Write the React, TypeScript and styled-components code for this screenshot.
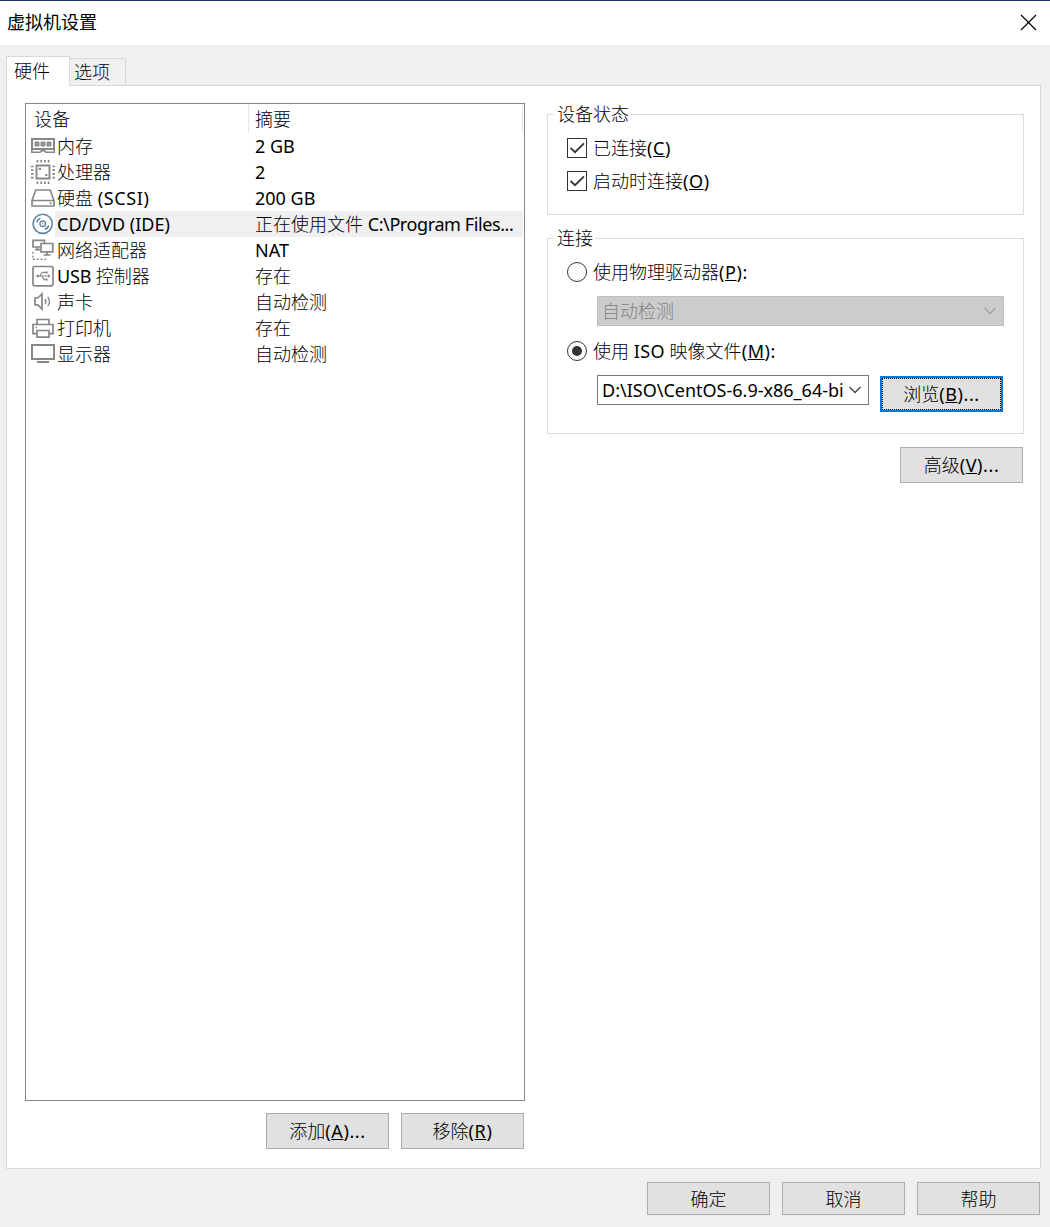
import React, { useState } from "react";
import styled, { createGlobalStyle, css } from "styled-components";

const GlobalStyle = createGlobalStyle`
  *, *::before, *::after { box-sizing: border-box; }
  html, body { margin: 0; padding: 0; background: #f0f0f0; }
  body {
    font-family: "Noto Sans", "Noto Sans CJK SC", sans-serif;
    font-size: 18px;
    line-height: 26px;
    color: #000;
  }
  button { font: inherit; color: inherit; }
`;

const Dialog = styled.div`
  width: 1050px;
  height: 1227px;
  display: flex;
  flex-direction: column;
  background: #f0f0f0;
  border-top: 1px solid #17375e;
  overflow: hidden;
  white-space: nowrap;
`;

const TitleBar = styled.header`
  height: 44px;
  flex: none;
  display: flex;
  align-items: center;
  justify-content: space-between;
  padding: 0 13px 2px 7px;
  background: #fff;
`;

const Title = styled.h1`
  margin: 0;
  font-size: 18px;
  font-weight: 400;
`;

const CloseButton = styled.button`
  width: 17px;
  height: 17px;
  padding: 0;
  border: 0;
  background: none;
  display: flex;
`;

const TabStrip = styled.nav`
  height: 40px;
  flex: none;
  display: flex;
  align-items: flex-end;
  padding-left: 6px;
`;

const Tab = styled.button<{ $active?: boolean }>`
  padding: 0;
  border: 1px solid #d9d9d9;
  border-bottom: 0;
  display: flex;
  font-weight: 300;
  ${(p) =>
    p.$active
      ? css`
          width: 64px;
          height: 30px;
          margin-bottom: -1px;
          padding: 1px 0 0 7px;
          background: #fff;
          z-index: 1;
        `
      : css`
          width: 56px;
          height: 27px;
          padding: 0 0 0 4px;
          border-left: 0;
          background: #f0f0f0;
        `}
`;

const TabPage = styled.main`
  width: 1035px;
  height: 1084px;
  flex: none;
  margin-left: 6px;
  display: flex;
  gap: 22px;
  padding: 17px 0 0 18px;
  background: #fff;
  border: 1px solid #d9d9d9;
`;

const DeviceColumn = styled.section`
  width: 500px;
  display: flex;
  flex-direction: column;
  gap: 12px;
`;

const DeviceList = styled.div`
  height: 998px;
  border: 1px solid #828790;
  background: #fff;
`;

const ListHeader = styled.div`
  height: 29px;
  display: flex;
  padding-right: 1px;
  font-weight: 300;
`;

const HeaderCell = styled.div<{ $width: number; $indent: number }>`
  width: ${(p) => p.$width}px;
  height: 28px;
  margin-top: 1px;
  padding: 1px 0 0 ${(p) => p.$indent}px;
  border-right: 1px solid #e5e5e5;
`;

const DeviceRow = styled.div`
  height: 26px;
  display: flex;
  padding: 0 1px 0 5px;
  font-weight: 300;
`;

const RowText = styled.div<{ $selected?: boolean }>`
  flex: 1;
  display: flex;
  background: ${(p) => (p.$selected ? "#f0f0f0" : "transparent")};
`;

const DeviceName = styled.span`
  width: 200px;
  padding-left: 2px;
`;

const Latin = styled.span<{ $spacing?: number }>`
  font-weight: 400;
  letter-spacing: ${(p) => p.$spacing ?? 0}px;
`;

const ButtonRow = styled.div<{ $top?: number; $inset?: number }>`
  display: flex;
  justify-content: flex-end;
  gap: 12px;
  margin-top: ${(p) => p.$top ?? 0}px;
  padding-right: ${(p) => p.$inset ?? 0}px;
`;

const PushButton = styled.button<{ $height?: number; $focused?: boolean }>`
  width: 123px;
  height: ${(p) => p.$height ?? 36}px;
  flex: none;
  padding: 0;
  display: flex;
  align-items: center;
  justify-content: center;
  background: #e1e1e1;
  border: 1px solid #adadad;
  font-weight: 300;
  ${(p) =>
    p.$focused &&
    css`
      border: 2px solid #0078d7;
      outline: 1px dotted #000;
      outline-offset: -3px;
    `}
`;

const Settings = styled.section`
  width: 477px;
  padding-top: 11px;
  display: flex;
  flex-direction: column;
`;

const Group = styled.div<{ $height: number; $top?: number }>`
  height: ${(p) => p.$height}px;
  margin-top: ${(p) => p.$top ?? 0}px;
  padding: 0 19px;
  border: 1px solid #dcdcdc;
  display: flex;
  flex-direction: column;
  font-weight: 300;
`;

const Legend = styled.div`
  height: 26px;
  flex: none;
  align-self: flex-start;
  margin: -14px 0 1px -13px;
  padding: 0 2px 0 3px;
  background: #fff;
`;

const Choice = styled.div<{ $top: number }>`
  height: 20px;
  flex: none;
  margin-top: ${(p) => p.$top}px;
  display: flex;
  align-items: center;
  gap: 6px;
`;

const CheckMark = styled.span`
  width: 20px;
  height: 20px;
  border: 1px solid #333;
  background: #fff;
  display: flex;
`;

const RadioMark = styled.span<{ $checked?: boolean }>`
  width: 20px;
  height: 20px;
  border: 1px solid #333;
  border-radius: 50%;
  display: flex;
  align-items: center;
  justify-content: center;

  &::after {
    content: "";
    display: ${(p) => (p.$checked ? "block" : "none")};
    width: 10px;
    height: 10px;
    border-radius: 50%;
    background: #333;
  }
`;

const Combo = styled.div<{ $width: number; $disabled?: boolean }>`
  width: ${(p) => p.$width}px;
  height: 30px;
  flex: none;
  display: flex;
  align-items: center;
  justify-content: space-between;
  padding: 0 6px 0 4px;
  border: 1px solid ${(p) => (p.$disabled ? "#bfbfbf" : "#7a7a7a")};
  background: ${(p) => (p.$disabled ? "#ccc" : "#fff")};
  color: ${(p) => (p.$disabled ? "#838383" : "#000")};
`;

const ComboRow = styled.div<{ $top: number }>`
  display: flex;
  align-items: flex-start;
  gap: 11px;
  margin: ${(p) => p.$top}px 0 0 30px;
`;

const BrowseSlot = styled.div`
  padding-top: 1px;
`;

const Footer = styled.footer`
  padding: 13px 10px 0 0;
`;

const G = "#868686";

const Glyph = styled.svg`
  width: 24px;
  height: 26px;
  flex: none;
  display: block;
`;

const MemoryIcon = () => (
  <Glyph viewBox="0 0 24 26" fill="none" stroke={G}>
    <path d="M1 6h22v10H1z" strokeWidth="2" />
    <path d="M4 9h4v4H4zM10 9h4v4h-4zM16 9h4v4h-4z" fill="#999" strokeWidth="1" />
    <path d="M.8 16v3.3h8.4l1.2-1.5h3.2l1.2 1.5h8.4V16" strokeWidth="1.5" />
  </Glyph>
);

const CpuIcon = () => (
  <Glyph viewBox="0 0 24 26" fill="none" stroke={G}>
    <path d="M5.5 6.5h13v13h-13z" strokeWidth="1.9" />
    <path
      d="M6.5 1v2.6M10.2 1v2.6M13.9 1v2.6M17.6 1v2.6M6.5 22.4V25M10.2 22.4V25M13.9 22.4V25M17.6 22.4V25M0 7.5h2.6M0 11.2h2.6M0 14.9h2.6M0 18.6h2.6M21.4 7.5H24M21.4 11.2H24M21.4 14.9H24M21.4 18.6H24"
      strokeWidth="1.7"
    />
    <path d="M7.8 9.8H10M14.2 16h2.2" strokeWidth="2.2" />
  </Glyph>
);

const DiskIcon = () => (
  <Glyph viewBox="0 0 24 26" fill="none" stroke={G} strokeWidth="1.7" strokeLinejoin="round">
    <path d="M1 15.5 4.8 5h14.4L23 15.5V21H1zM1 15.5h22" />
    <path d="M18.5 18.3h2" />
  </Glyph>
);

const DiscIcon = () => (
  <Glyph viewBox="0 0 24 26" fill="none" stroke="#6487a5" strokeWidth="1.6">
    <circle cx="11.7" cy="12.8" r="9.6" fill="#fff" />
    <circle cx="11.7" cy="12.8" r="2.8" strokeWidth="1.4" />
    <circle cx="11.7" cy="12.8" r=".7" fill="#6487a5" stroke="none" />
    <path d="M5.8 11.2a6.2 6.2 0 0 1 3.6-4M17.6 14.4a6.2 6.2 0 0 1-3.6 4" strokeWidth="1.7" />
  </Glyph>
);

const NetworkIcon = () => (
  <Glyph viewBox="0 0 24 26" fill="none" stroke={G} strokeWidth="1.7">
    <path d="M9 10H2V3.3h11.5v3M6.5 10v2.5M4 12.7h5" />
    <path d="M10 6.5h11.8v8.3H10zM16 15v2.5M12.5 18h7" />
    <path d="M2 15v8M2 22.3h13" strokeDasharray="1.8 2" strokeWidth="1.5" />
  </Glyph>
);

const UsbIcon = () => (
  <Glyph viewBox="0 0 24 26" fill="none" stroke={G} strokeWidth="1.7">
    <rect x="2" y="3.5" width="20" height="19.3" rx="2" />
    <path d="M6 13h12M8.5 13l2.8-3.6H15M10.5 13l2.6 3.6H15" strokeWidth="1.2" />
    <path d="M4.6 13l2.8-1.8v3.6zM17 11.2l2.8 1.8-2.8 1.8z" fill={G} stroke="none" />
    <path d="M14.6 8.4h2v2h-2zM14.6 15.6h2v2h-2z" fill={G} stroke="none" />
  </Glyph>
);

const SoundIcon = () => (
  <Glyph viewBox="0 0 24 26" fill="none" stroke={G} strokeWidth="1.7">
    <path d="M4 9h2.8L11 5v15l-4.2-4.2H4z" />
    <path d="M14 10q1.7 2.5 0 5M16.8 8q3.2 4.5 0 9" strokeWidth="1.4" />
  </Glyph>
);

const PrinterIcon = () => (
  <Glyph viewBox="0 0 24 26" fill="none" stroke={G} strokeWidth="1.7">
    <path d="M6 9.5V4.5h12v5M6 18.7H2V9.5h20v9.2h-4" />
    <path d="M6 15.5h12v6.7H6z" />
    <path d="M4.5 12.5H6" />
  </Glyph>
);

const DisplayIcon = () => (
  <Glyph viewBox="0 0 24 26" fill="none" stroke={G} strokeWidth="2">
    <path d="M1 4h22v14H1zM6 21h12" />
  </Glyph>
);

const Chevron = ({ color }: { color: string }) => (
  <svg width="14" height="8" viewBox="0 0 14 8" fill="none" stroke={color} strokeWidth="1.3">
    <path d="M1.5 1 7 6.5 12.5 1" />
  </svg>
);

const Tick = () => (
  <svg width="18" height="18" viewBox="0 0 18 18" fill="none" stroke="#333" strokeWidth="1.8">
    <path d="M2.5 8.8 7 13.2 16 4.3" />
  </svg>
);

const Accel = ({ k, after = "" }: { k: string; after?: string }) => (
  <Latin $spacing={0.6}>
    (<u>{k}</u>){after}
  </Latin>
);

const devices: { icon: React.FC; name: React.ReactNode; summary: React.ReactNode }[] = [
  { icon: MemoryIcon, name: "内存", summary: <Latin>2 GB</Latin> },
  { icon: CpuIcon, name: "处理器", summary: <Latin>2</Latin> },
  { icon: DiskIcon, name: <>硬盘 <Latin $spacing={0.65}>(SCSI)</Latin></>, summary: <Latin>200 GB</Latin> },
  {
    icon: DiscIcon,
    name: <Latin>CD/DVD (IDE)</Latin>,
    summary: <>正在使用文件 <Latin $spacing={-0.4}>C:\Program Files...</Latin></>,
  },
  { icon: NetworkIcon, name: "网络适配器", summary: <Latin>NAT</Latin> },
  { icon: UsbIcon, name: <><Latin $spacing={-0.2}>USB</Latin> 控制器</>, summary: "存在" },
  { icon: SoundIcon, name: "声卡", summary: "自动检测" },
  { icon: PrinterIcon, name: "打印机", summary: "存在" },
  { icon: DisplayIcon, name: "显示器", summary: "自动检测" },
];

export default function App() {
  const [selected, setSelected] = useState(3);

  return (
    <>
      <GlobalStyle />
      <Dialog>
        <TitleBar>
          <Title>虚拟机设置</Title>
          <CloseButton aria-label="关闭">
            <svg width="17" height="17" viewBox="0 0 17 17" stroke="#000" strokeWidth="1.2">
              <path d="M1 1l15 15M16 1 1 16" />
            </svg>
          </CloseButton>
        </TitleBar>
        <TabStrip>
          <Tab $active>硬件</Tab>
          <Tab>选项</Tab>
        </TabStrip>
        <TabPage>
          <DeviceColumn>
            <DeviceList>
              <ListHeader>
                <HeaderCell $width={223} $indent={8}>设备</HeaderCell>
                <HeaderCell $width={274} $indent={6}>摘要</HeaderCell>
              </ListHeader>
              {devices.map(({ icon: Icon, name, summary }, i) => (
                <DeviceRow key={i} onClick={() => setSelected(i)}>
                  <Icon />
                  <RowText $selected={i === selected}>
                    <DeviceName>{name}</DeviceName>
                    <span>{summary}</span>
                  </RowText>
                </DeviceRow>
              ))}
            </DeviceList>
            <ButtonRow $inset={1}>
              <PushButton>添加<Accel k="A" after="..." /></PushButton>
              <PushButton>移除<Accel k="R" /></PushButton>
            </ButtonRow>
          </DeviceColumn>
          <Settings>
            <Group $height={101}>
              <Legend>设备状态</Legend>
              <Choice $top={10}>
                <CheckMark><Tick /></CheckMark>
                <span>已连接<Accel k="C" /></span>
              </Choice>
              <Choice $top={13}>
                <CheckMark><Tick /></CheckMark>
                <span>启动时连接<Accel k="O" /></span>
              </Choice>
            </Group>
            <Group $height={196} $top={23}>
              <Legend>连接</Legend>
              <Choice $top={10}>
                <RadioMark />
                <span>使用物理驱动器<Accel k="P" after=":" /></span>
              </Choice>
              <ComboRow $top={14}>
                <Combo $width={407} $disabled>
                  自动检测
                  <Chevron color="#a0a0a0" />
                </Combo>
              </ComboRow>
              <Choice $top={15}>
                <RadioMark $checked />
                <span>使用 <Latin $spacing={0.4}>ISO</Latin> 映像文件<Accel k="M" after=":" /></span>
              </Choice>
              <ComboRow $top={14}>
                <Combo $width={272}>
                  <Latin>D:\ISO\CentOS-6.9-x86_64-bi</Latin>
                  <Chevron color="#444" />
                </Combo>
                <BrowseSlot>
                  <PushButton $focused>浏览<Accel k="B" after="..." /></PushButton>
                </BrowseSlot>
              </ComboRow>
            </Group>
            <ButtonRow $top={13} $inset={1}>
              <PushButton>高级<Accel k="V" after="..." /></PushButton>
            </ButtonRow>
          </Settings>
        </TabPage>
        <Footer>
          <ButtonRow>
            <PushButton $height={33}>确定</PushButton>
            <PushButton $height={33}>取消</PushButton>
            <PushButton $height={33}>帮助</PushButton>
          </ButtonRow>
        </Footer>
      </Dialog>
    </>
  );
}
